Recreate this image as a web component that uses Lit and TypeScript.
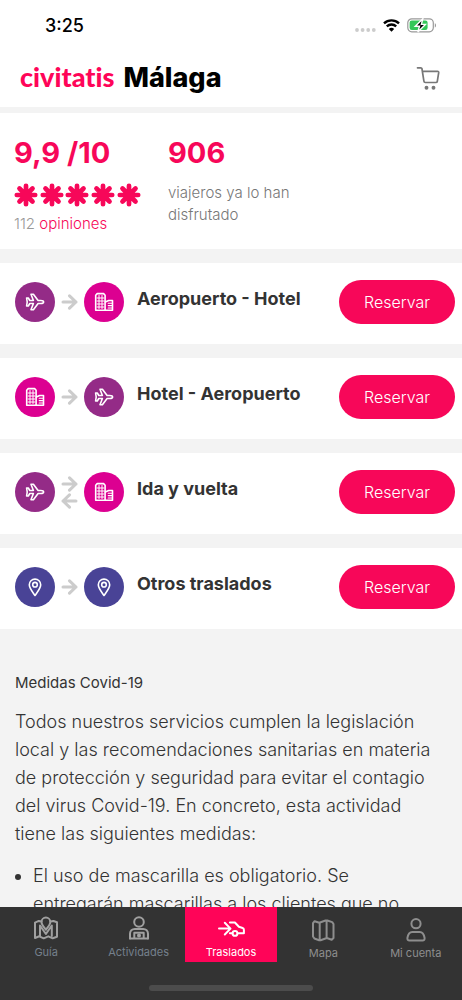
import { LitElement, html, svg, css } from "lit";
import { customElement, property } from "lit/decorators.js";

type Place = "plane" | "hotel" | "pin";

const placeArt = {
  plane: svg`<path d="M3.600 8h1.700l1.500 2.500h3.600L8 4.300h2.400l4.700 6.200h2.600c1.800 0 2.900.8 2.900 1.500s-1.100 1.500-2.900 1.500h-2.600l-4.700 6.200H8l2.400-6.200H6.800L5.300 16H3.600l.6-4z"/>`,
  hotel: svg`<path d="M3.700 20.300V5.200L5.200 3.600h6.400l1.500 1.600v15.100z"/><path d="M13.300 20.300h7.200V10.500h-3.800l-3.400 1.400"/><path d="M7 5.500v13M10 5.500v13M5 8h7M5 11h7M5 14h7M5 17h7" stroke-width="1"/><path d="M16.200 13.200h3.500M16.200 15.600h3.500M16.200 18h3.500" stroke-width="1.100"/>`,
  pin: svg`<path d="M12 20.500C9.600 17 6.300 13.300 6.300 9.800a5.700 5.700 0 0 1 11.400 0c0 3.500-3.300 7.200-5.700 10.700z"/><circle cx="12" cy="9.700" r="2.300"/>`,
};

const tabArt = {
  guia: svg`<path d="M8.500 5.500 5.800 4.900 2 6.600V22l4.300-1.700 4.400 2 4.600-2 4.400 2 4.300-1.500V6.200l-3.500-1.200-3 .6"/><path d="M7 20V9.500l5.900 8.500 5.900-8.500V20"/><path d="M12.900 13.800C10.600 10.800 8.500 8.600 8.500 6a4.400 4.400 0 0 1 8.800 0c0 2.600-2.100 4.800-4.400 7.800z"/>`,
  actividades: svg`<circle cx="13" cy="6" r="4.800"/><path d="M4 22.500v-4.800a4.800 4.800 0 0 1 4.800-4.800h8.400a4.800 4.800 0 0 1 4.800 4.800v4.800"/><path d="M4 22.500h18M8.300 22.500v-5.800h9.400v5.800"/><circle cx="13" cy="19.600" r="1"/>`,
  traslados: svg`<path d="M1 12.600h11M6.800 6.700l5.700 5.900-5.700 5.900M11.900 6.500h5l4 4.300 3.700 1.200c.9.300 1.300.9 1.300 1.900v3.300h-6.200M11.900 17.200h2.400"/><circle cx="17" cy="17.400" r="2.400"/>`,
  mapa: svg`<path d="M3 6.200 4.600 4.200l4.700 1.500 6.200-2.200h1.800l4.900 1.600 1.300 1.900v14l-1.800 1.700-4.900-1.700-6.200 2.200h-1.500L4.400 21.500 3 19.500zM9.700 5.700v17.300M16.600 3.600v17.300"/>`,
  cuenta: svg`<circle cx="13" cy="6.700" r="4.600"/><path d="M9.300 15h7.400c2.700 0 4.300 2.300 4.900 6 .2 1.500-.6 2.500-2 2.500H6.400c-1.400 0-2.200-1-2-2.500.6-3.700 2.200-6 4.900-6z"/>`,
};

@customElement("place-badge")
class PlaceBadge extends LitElement {
  @property() kind: Place = "plane";

  static styles = css`
    :host { display: block; }
    .disc {
      width: 40px;
      height: 40px;
      border-radius: 50%;
      display: grid;
      place-items: center;
    }
    .plane { background: #942b87; }
    .hotel { background: #dc0091; }
    .pin { background: #494396; }
    svg { display: block; width: 24px; height: 24px; fill: none; stroke: #fff; stroke-width: 1.6; stroke-linejoin: round; stroke-linecap: round; }
  `;

  render() {
    return html`<div class="disc ${this.kind}">
      <svg viewBox="0 0 24 24" aria-hidden="true">${placeArt[this.kind]}</svg>
    </div>`;
  }
}

@customElement("transfer-card")
class TransferCard extends LitElement {
  @property() from: Place = "plane";
  @property() to: Place = "hotel";
  @property() label = "";
  @property({ type: Boolean }) both = false;

  static styles = css`
    :host { display: block; }
    .card {
      display: flex;
      box-sizing: border-box;
      min-height: 81px;
      padding: 0 7px 3px 15px;
      background: #fff;
    }
    .route { display: flex; align-items: center; gap: 6px; }
    .arrows { display: grid; gap: 1px; }
    .arrow { display: block; width: 17px; height: 16px; fill: none; stroke: #ccc; stroke-width: 3; stroke-linecap: round; stroke-linejoin: round; }
    .title {
      flex: 1;
      margin: 24px 0 0 13px;
      font-size: 18px;
      line-height: 24px;
      font-weight: 700;
      color: #333;
    }
    .reserve {
      align-self: center;
      width: 116px;
      height: 44px;
      border: 0;
      padding: 0;
      border-radius: 22px;
      background: #f70759;
      color: #fff;
      font: 300 16px/24px Inter, sans-serif;
    }
  `;

  render() {
    return html`<article class="card">
      <div class="route">
        <place-badge .kind=${this.from}></place-badge>
        <div class="arrows">
          <svg class="arrow" viewBox="0 0 17 16" aria-hidden="true"><path d="M2 8h13M8.500 1.800 15 8l-6.500 6.200"/></svg>
          ${this.both
            ? html`<svg class="arrow" viewBox="0 0 17 16" aria-hidden="true"><path d="M15 8H2M8.500 1.800 2 8l6.500 6.200"/></svg>`
            : ""}
        </div>
        <place-badge .kind=${this.to}></place-badge>
      </div>
      <h2 class="title">${this.label}</h2>
      <button class="reserve" type="button">Reservar</button>
    </article>`;
  }
}

@customElement("tab-bar")
class TabBar extends LitElement {
  static styles = css`
    :host { display: block; background: #333; }
    .tabs { display: grid; grid-template-columns: repeat(5, 1fr); }
    .tab {
      display: flex;
      flex-direction: column;
      align-items: center;
      gap: 1px;
      height: 55px;
      box-sizing: border-box;
      padding-top: 9px;
      color: #8e8e8e;
      text-decoration: none;
      font-size: 11px;
      line-height: 18px;
    }
    .muted .name { color: #75808c; }
    .muted .icon { color: #a0a0a0; }
    .active { background: #ff0458; color: #fff; }
    .low { padding-top: 10px; }
    .icon { display: block; width: 26px; height: 26px; overflow: visible; fill: none; stroke: currentColor; stroke-width: 2; stroke-linejoin: round; stroke-linecap: round; }
    .home { width: 164px; height: 6px; border-radius: 3px; background: #4c4c4c; margin: 23px auto 9px; }
  `;

  private tabs = [
    { name: "Guía", art: tabArt.guia, look: "muted" },
    { name: "Actividades", art: tabArt.actividades, look: "muted" },
    { name: "Traslados", art: tabArt.traslados, look: "active" },
    { name: "Mapa", art: tabArt.mapa, look: "low" },
    { name: "Mi cuenta", art: tabArt.cuenta, look: "low" },
  ];

  render() {
    return html`<nav class="tabs">
        ${this.tabs.map(
          (t) => html`<a class="tab ${t.look}" href="#">
            <svg class="icon" viewBox="0 0 26 26" aria-hidden="true">${t.art}</svg>
            <span class="name">${t.name}</span>
          </a>`
        )}
      </nav>
      <div class="home"></div>`;
  }
}

@customElement("app-root")
class AppRoot extends LitElement {
  static styles = css`
    :host {
      display: flex;
      flex-direction: column;
      height: 100vh;
      overflow: hidden;
      background: #f3f3f3;
      color: #333;
      font-family: Inter, sans-serif;
    }
    .top { background: #fff; margin-bottom: 6px; }
    .status {
      display: flex;
      align-items: center;
      justify-content: space-between;
      height: 50px;
      padding: 0 25px 0 45px;
      color: #000;
      font-size: 18px;
      font-weight: 500;
    }
    .signals { display: flex; align-items: center; gap: 7px; }
    .signals svg { display: block; }
    .brandbar {
      display: flex;
      align-items: center;
      justify-content: space-between;
      height: 57px;
      padding: 0 21px 2px 20px;
      box-sizing: border-box;
    }
    .brand {
      display: flex;
      align-items: baseline;
      gap: 9px;
      margin: 0;
      font-size: 27px;
      line-height: 36px;
      font-weight: 800;
      color: #000;
    }
    .logo { color: #ff0458; font-family: Lato, sans-serif; font-weight: 900; font-variant-ligatures: none; }
    .cart { border: 0; padding: 0; background: none; }
    .cart svg { display: block; }
    .content { flex: 1; min-height: 0; overflow: hidden; }
    .rating {
      display: flex;
      gap: 27px;
      padding: 22px 15px 14px 14px;
      background: #fff;
    }
    .figure { margin: 0; font-size: 29px; line-height: 36px; font-weight: 700; color: #f70759; }
    .stars { display: block; width: 127px; height: 24px; margin: 12px 0 6px; }
    .opinions { margin: 0; font-size: 15px; line-height: 22px; font-weight: 300; color: #999; }
    .opinions a { color: #f70759; text-decoration: none; }
    .travellers { max-width: 140px; margin: 11px 0 0; font-size: 15px; line-height: 22px; font-weight: 300; color: #777; }
    .transfers { display: grid; gap: 14px; padding-top: 14px; }
    .info { padding: 43px 15px 0; font-size: 18px; line-height: 28px; font-weight: 300; }
    .info h3 { margin: 0 0 14px; font-size: 15px; line-height: 22px; font-weight: 400; }
    .info p { margin: 0; }
    .info ul { margin: 14px 0 0; padding: 0 36px 0 18px; }
  `;

  render() {
    const spokes = [26, 52, 77, 103, 129].map((x) => x - 14);
    return html`
      <header class="top">
        <div class="status">
          <span>3:25</span>
          <div class="signals">
            <svg width="21" height="14" viewBox="0 0 21 14" fill="#ccc"><circle cx="2" cy="12" r="1.900"/><circle cx="7.600" cy="12" r="1.900"/><circle cx="13.200" cy="12" r="1.900"/><circle cx="18.800" cy="12" r="1.900"/></svg>
            <svg width="17" height="14" viewBox="0 0 17 14"><path d="M1 5.300a11 11 0 0 1 15 0M3.800 8.300a7 7 0 0 1 9.400 0" fill="none" stroke="#000" stroke-width="2.400"/><path d="M8.500 13.700 5.800 10.900a4 4 0 0 1 5.400 0z"/></svg>
            <svg width="30" height="15" viewBox="0 0 30 15"><rect x=".8" y=".8" width="25.500" height="13" rx="4" fill="#fff" stroke="#999" stroke-width="1.200"/><rect x="2.600" y="2.600" width="18" height="9.400" rx="2.200" fill="#34c759"/><path d="M27.800 5.200c1.600.5 1.600 3.700 0 4.200z" fill="#999"/><path d="M15.800.8 8.300 8.300h4.200l-1.700 5.700 7.600-7.600h-4z" fill="#000" stroke="#fff" stroke-width="1.400"/></svg>
          </div>
        </div>
        <div class="brandbar">
          <h1 class="brand"><span class="logo">civitatis</span><span>Málaga</span></h1>
          <button class="cart" type="button" aria-label="Carrito">
            <svg width="26" height="26" viewBox="0 0 26 26" fill="none" stroke="#777" stroke-width="1.700" stroke-linecap="round" stroke-linejoin="round"><path d="M2.500 2.800h3.200c.8 0 1.200.4 1.300 1.200l1.900 12.200c.1.900.6 1.300 1.400 1.300h10.600c.8 0 1.300-.4 1.400-1.200l1.400-8.600c.1-.8-.3-1.300-1.100-1.300H7.500"/><circle cx="11.500" cy="22.800" r="1.100" fill="#777"/><circle cx="18.500" cy="22.800" r="1.100" fill="#777"/></svg>
          </button>
        </div>
      </header>
      <main class="content">
        <section class="rating">
          <div>
            <p class="figure">9,9 /10</p>
            <svg class="stars" viewBox="0 0 127 24" stroke="#f70759" stroke-width="4.700" stroke-linecap="round" role="img" aria-label="Cinco estrellas">
              ${spokes.map((x) => svg`<path d="M${x} 2.800v18.400M${x - 9.2} 12h18.400M${x - 6.5} 5.500l13 13M${x + 6.5} 5.500l-13 13"/>`)}
            </svg>
            <p class="opinions">112 <a href="#">opiniones</a></p>
          </div>
          <div>
            <p class="figure">906</p>
            <p class="travellers">viajeros ya lo han disfrutado</p>
          </div>
        </section>
        <section class="transfers">
          <transfer-card from="plane" to="hotel" label="Aeropuerto - Hotel"></transfer-card>
          <transfer-card from="hotel" to="plane" label="Hotel - Aeropuerto"></transfer-card>
          <transfer-card from="plane" to="hotel" label="Ida y vuelta" both></transfer-card>
          <transfer-card from="pin" to="pin" label="Otros traslados"></transfer-card>
        </section>
        <section class="info">
          <h3>Medidas Covid-19</h3>
          <p>Todos nuestros servicios cumplen la legislación local y las recomendaciones sanitarias en materia de protección y seguridad para evitar el contagio del virus Covid-19. En concreto, esta actividad tiene las siguientes medidas:</p>
          <ul>
            <li>El uso de mascarilla es obligatorio. Se entregarán mascarillas a los clientes que no</li>
          </ul>
        </section>
      </main>
      <tab-bar></tab-bar>
    `;
  }
}
